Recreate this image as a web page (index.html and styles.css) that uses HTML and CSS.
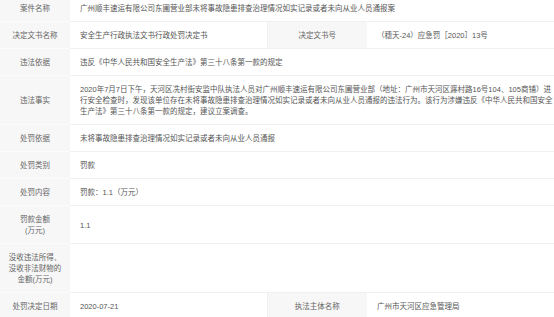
FILE: index.html
```html
<!DOCTYPE html>
<html lang="zh">
<head>
<meta charset="utf-8">
<link rel="stylesheet" href="styles.css">
</head>
<body>
<table class="info">
  <colgroup>
    <col class="c-label">
    <col class="c-val">
    <col class="c-label2">
    <col class="c-val2">
  </colgroup>
  <tr>
    <th>案件名称</th>
    <td colspan="3">广州顺丰速运有限公司东圃营业部未将事故隐患排查治理情况如实记录或者未向从业人员通报案</td>
  </tr>
  <tr>
    <th>决定文书名称</th>
    <td>安全生产行政执法文书行政处罚决定书</td>
    <th class="mid">决定文书号</th>
    <td>（穗天-24）应急罚［2020］13号</td>
  </tr>
  <tr>
    <th>违法依据</th>
    <td colspan="3">违反《中华人民共和国安全生产法》第三十八条第一款的规定</td>
  </tr>
  <tr>
    <th>违法事实</th>
    <td colspan="3">2020年7月7日下午，天河区冼村街安监中队执法人员对广州顺丰速运有限公司东圃营业部（地址：广州市天河区瀍村路16号104、105商铺）进<br>行安全检查时，发现该单位存在未将事故隐患排查治理情况如实记录或者未向从业人员通报的违法行为。该行为涉嫌违反《中华人民共和国安全<br>生产法》第三十八条第一款的规定，建议立案调查。</td>
  </tr>
  <tr>
    <th>处罚依据</th>
    <td colspan="3">未将事故隐患排查治理情况如实记录或者未向从业人员通报</td>
  </tr>
  <tr>
    <th>处罚类别</th>
    <td colspan="3">罚款</td>
  </tr>
  <tr>
    <th>处罚内容</th>
    <td colspan="3">罚款：1.1（万元）</td>
  </tr>
  <tr>
    <th>罚款金额<br>(万元)</th>
    <td colspan="3">1.1</td>
  </tr>
  <tr>
    <th>没收违法所得、<br>没收非法财物的<br>金额(万元)</th>
    <td colspan="3"></td>
  </tr>
  <tr>
    <th>处罚决定日期</th>
    <td>2020-07-21</td>
    <th class="mid">执法主体名称</th>
    <td>广州市天河区应急管理局</td>
  </tr>
</table>
</body>
</html>
```

FILE: styles.css
```css
html, body {
  margin: 0;
  padding: 0;
  background: #ffffff;
}

body {
  font-family: "Liberation Sans", "Noto Sans CJK SC", sans-serif;
  font-size: 7.5px;
  line-height: 11px;
  color: #555555;
  overflow: hidden;
}

.info {
  width: 554px;
  margin-top: -5px;
  table-layout: fixed;
  border-collapse: collapse;
}

.c-label { width: 70px; }
.c-val { width: 197px; }
.c-label2 { width: 100px; }
.c-val2 { width: 187px; }

.info th,
.info td {
  height: 11px;
  padding: 8px 3px 7px;
  border-bottom: 1px solid #f0f0f0;
  vertical-align: middle;
}

.info th {
  background: #f7f7f7;
  color: #666666;
  font-weight: normal;
  text-align: center;
  border-bottom-color: #fbfbfb;
}

.info th.mid {
  border-left: 1px solid #f0f0f0;
  border-bottom-color: #f0f0f0;
}

.info td {
  padding-left: 10px;
  padding-right: 0;
  text-align: left;
  white-space: nowrap;
}
```
